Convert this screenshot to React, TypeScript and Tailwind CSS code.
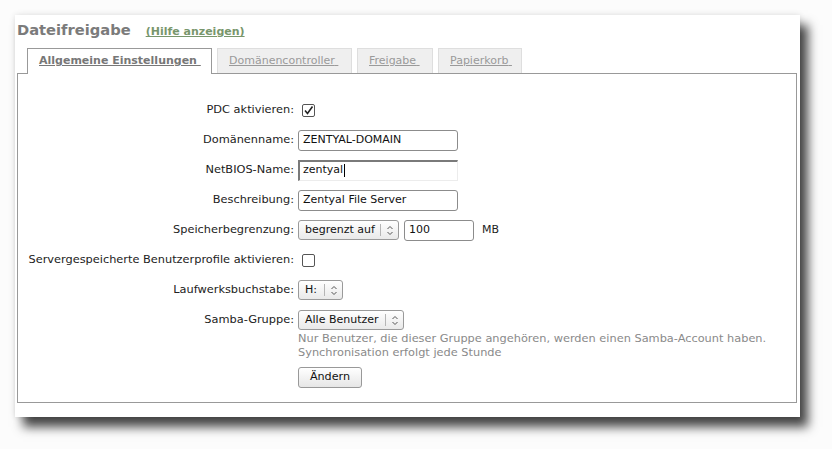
import React from 'react'

const font = { fontFamily: '"DejaVu Sans", Verdana, sans-serif' }

function Chevrons() {
  return (
    <svg width="8" height="11" viewBox="0 0 8 11" className="block">
      <path d="M1.5 4 L4 1.5 L6.5 4" fill="none" stroke="#555" strokeWidth="1" />
      <path d="M1.5 7 L4 9.5 L6.5 7" fill="none" stroke="#555" strokeWidth="1" />
    </svg>
  )
}

function Select({ value, width, split }: { value: string; width: string; split: string }) {
  return (
    <div
      className={`flex h-[20px] items-stretch rounded-[3px] border border-[#9a9a9a] bg-gradient-to-b from-white to-[#e9e9e9] text-[11px] text-[#111] ${width}`}
    >
      <span className={`flex items-center whitespace-nowrap pl-[6px] ${split}`}>{value}</span>
      <span className="my-[3px] w-px bg-[#b5b5b5]" />
      <span className="flex flex-1 items-center justify-center">
        <Chevrons />
      </span>
    </div>
  )
}

function TextInput({ value, width = 'w-[160px]' }: { value: string; width?: string }) {
  return (
    <div
      className={`flex h-[21px] items-center rounded-[3px] border border-[#8c8c8c] bg-white pl-[4px] text-[11px] text-[#111] ${width}`}
    >
      {value}
    </div>
  )
}

function Checkbox({ checked }: { checked?: boolean }) {
  return (
    <div className="ml-[4px] flex h-[13px] w-[13px] items-center justify-center rounded-[2px] border border-[#555] bg-white">
      {checked && (
        <svg width="11" height="11" viewBox="0 0 11 11">
          <path d="M2 5.5 L4.5 8.5 L9.5 1.5" fill="none" stroke="#222" strokeWidth="1.6" />
        </svg>
      )}
    </div>
  )
}

function Row({ label, children }: { label: string; children: React.ReactNode }) {
  return (
    <div className="flex h-[30px] items-center">
      <div className="w-[280px] pr-[4px] text-right text-[11.35px] text-[#222]">{label}</div>
      <div className="flex items-center">{children}</div>
    </div>
  )
}

const tabs = ['Domänencontroller', 'Freigabe', 'Papierkorb']
const tabWidths = ['w-[135px]', 'w-[76px]', 'w-[84px]']

export default function App() {
  return (
    <div className="h-[449px] w-[832px] bg-[#fcfcfc] pl-[15px] pt-[15px]" style={font}>
      <div className="h-[402px] w-[785px] bg-white pt-[8px] shadow-[8px_10px_10px_rgba(0,0,0,0.72),0_0_6px_rgba(0,0,0,0.12)]">
        <div className="flex h-[15px] items-baseline pl-[2px]">
          <h1 className="text-[14.7px] font-bold leading-none text-[#7b7b7b]">Dateifreigabe</h1>
          <a className="ml-[15px] text-[11px] font-bold leading-none text-[#78966c] underline">
            (Hilfe anzeigen)
          </a>
        </div>

        <div className="mt-[10px] flex h-[25px] items-end pl-[12px]">
          <div className="relative z-10 -mb-px flex h-[26px] w-[185px] items-center border border-b-0 border-[#999] bg-white pl-[11px] text-[11px] font-bold text-[#777]">
            <span className="underline">Allgemeine Einstellungen&nbsp;</span>
          </div>
          {tabs.map((t, i) => (
            <div
              key={t}
              className={`ml-[5px] flex h-[25px] items-center border border-b-0 border-[#dedede] bg-[#efefef] pl-[11px] text-[11px] text-[#9a9a9a] ${tabWidths[i]}`}
            >
              <span className="underline">{t}&nbsp;</span>
            </div>
          ))}
        </div>

        <div className="ml-[2px] h-[330px] w-[780px] border border-[#999] bg-white pt-[21px]">
          <Row label="PDC aktivieren:">
            <Checkbox checked />
          </Row>
          <Row label="Domänenname:">
            <TextInput value="ZENTYAL-DOMAIN" />
          </Row>
          <Row label="NetBIOS-Name:">
            <div className="flex h-[21px] w-[160px] items-center border-l-2 border-t-2 border-b border-r border-[#7a7a7a] border-b-[#ececec] border-r-[#ececec] bg-white pl-[3px] text-[11px] text-[#111]">
              zentyal
              <span className="ml-px inline-block h-[13px] w-px bg-black" />
            </div>
          </Row>
          <Row label="Beschreibung:">
            <TextInput value="Zentyal File Server" />
          </Row>
          <Row label="Speicherbegrenzung:">
            <Select value="begrenzt auf" width="w-[101px]" split="w-[81px]" />
            <div className="ml-[5px]">
              <TextInput value="100" width="w-[70px]" />
            </div>
            <span className="ml-[8px] text-[11px] text-[#222]">MB</span>
          </Row>
          <Row label="Servergespeicherte Benutzerprofile aktivieren:">
            <Checkbox />
          </Row>
          <Row label="Laufwerksbuchstabe:">
            <Select value="H:" width="w-[45px]" split="w-[25px]" />
          </Row>
          <Row label="Samba-Gruppe:">
            <Select value="Alle Benutzer" width="w-[106px]" split="w-[86px]" />
          </Row>
          <div className="ml-[280px] mt-[-4px] text-[11.35px] leading-[14px] text-[#8a8a8a]">
            <p>Nur Benutzer, die dieser Gruppe angehören, werden einen Samba-Account haben.</p>
            <p>Synchronisation erfolgt jede Stunde</p>
          </div>
          <div className="ml-[280px] mt-[8px]">
            <button className="flex h-[21px] w-[64px] items-center justify-center rounded-[3px] border border-[#999] bg-gradient-to-b from-white to-[#e6e6e6] text-[11.2px] text-[#111]">
              Ändern
            </button>
          </div>
        </div>
      </div>
    </div>
  )
}
